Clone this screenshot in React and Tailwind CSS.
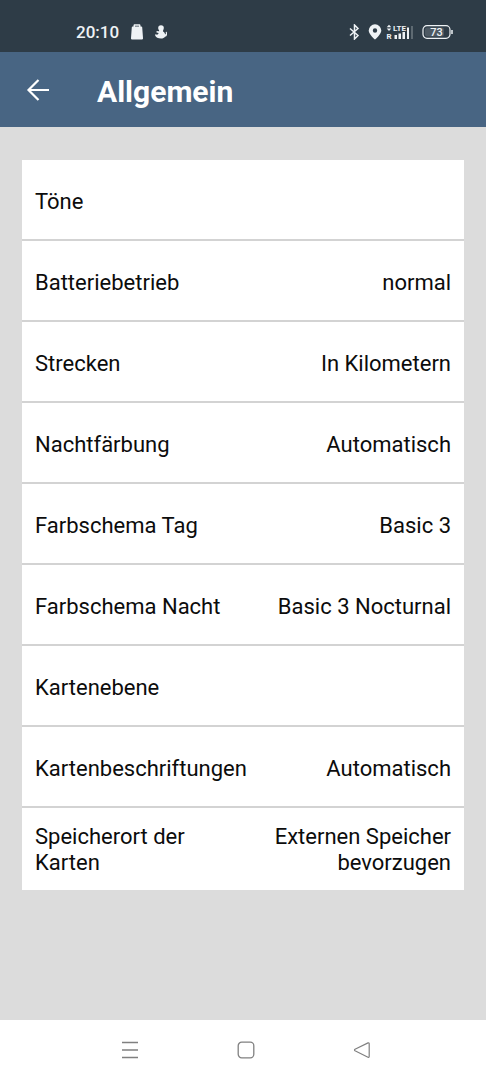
import React from 'react';

const settings = [
    { label: 'Töne' },
    { label: 'Batteriebetrieb', value: 'normal' },
    { label: 'Strecken', value: 'In Kilometern' },
    { label: 'Nachtfärbung', value: 'Automatisch' },
    { label: 'Farbschema Tag', value: 'Basic 3' },
    { label: 'Farbschema Nacht', value: 'Basic 3 Nocturnal' },
    { label: 'Kartenebene' },
    { label: 'Kartenbeschriftungen', value: 'Automatisch' },
    { label: 'Speicherort der Karten', value: 'Externen Speicher bevorzugen' },
];

const StatusBar = () => (
    <div className="flex h-[52px] items-center justify-between bg-[#2e3c47] pt-3 pr-8 pl-[76px] text-[#eef2f5]">
        <div className="flex items-center gap-3">
            <span className="text-[17px] leading-5 font-medium">20:10</span>
            <svg className="h-4 w-3" viewBox="0 0 12 16" fill="currentColor" aria-hidden="true">
                <path d="M2.500 2.500V1.400C2.500.7 3 .3 3.700.3h4.600c.7 0 1.200.4 1.200 1.100v1.100h.8c.5 0 .8.3.9.8L12 14c.1 1-.5 1.600-1.400 1.600H1.400C.5 15.600-.1 15 0 14L.8 3.300c.1-.5.4-.8.9-.8zm1.500 0h4v-.8H4z" />
            </svg>
            <svg className="h-4 w-3" viewBox="0 0 12 16" fill="currentColor" aria-hidden="true">
                <circle cx="6" cy="4" r="2.800" />
                <path d="M4 5.500h4.200L8 7.500c1.400.6 2.100 1.800 2 3.100.9-.4 1.100-1.300.6-2.500l1.100-.4c.9 2.500.2 4.600-1.700 5.100-.7 1.200-2.100 1.800-4 1.800-2.900 0-5.100-1-5.900-3.300-.3-.9.600-1.300 1.300-.9.5.4 1 .3 1.500-.1l.8-1.300-2.200-.6.100-1.300 2.600.2z" />
            </svg>
        </div>
        <div className="flex items-center">
            <svg className="mr-2 h-4 w-3" viewBox="0 0 12 16" fill="none" stroke="currentColor" strokeWidth="1.500" aria-hidden="true">
                <path d="M2 4.500 10 11.500 6.500 15V1L10 4.500l-8 7" />
            </svg>
            <svg className="mr-1 h-4 w-[14px]" viewBox="0 0 14 16" fill="currentColor" fillRule="evenodd" aria-hidden="true">
                <path d="M7 .3A6.300 6.300 0 0 0 .7 6.600C.7 10.300 7 15.700 7 15.700s6.300-5.400 6.300-9.100A6.300 6.300 0 0 0 7 .3zm0 4a2.200 2.200 0 1 1 0 4.400 2.200 2.200 0 0 1 0-4.400z" />
            </svg>
            <svg className="mr-2 h-4 w-[28px]" viewBox="0 0 28 16" fill="currentColor" aria-hidden="true">
                <path d="M3 .8 5.300 3.300H.7zM3 7 .7 4.600h4.600z" />
                <text x="0.500" y="15" fontSize="8" fontWeight="700" fontFamily="Roboto, sans-serif">R</text>
                <text x="7" y="6.800" fontSize="8" fontWeight="700" fontFamily="Roboto, sans-serif">LTE</text>
                <path d="M8.500 11H11v4H8.500zM12.500 9.500H15V15h-2.500zM16.500 8H19v7h-2.500zM21 3.500h2V15h-2z" />
                <path d="M25 2h2v13h-2z" opacity=".25" />
            </svg>
            <svg className="h-4 w-8" viewBox="0 0 32 16" aria-hidden="true">
                <rect x="1" y="1.700" width="27" height="12.600" rx="4" fill="none" stroke="currentColor" strokeWidth="1.200" />
                <rect x="3" y="3.500" width="19" height="9" rx="2" fill="#4d5963" />
                <path d="M30 6v4" stroke="currentColor" strokeWidth="1.500" />
                <text x="14.500" y="12" textAnchor="middle" fontSize="11" fontWeight="500" fontFamily="Roboto, sans-serif" fill="currentColor">73</text>
            </svg>
        </div>
    </div>
);

const Header = () => (
    <header className="flex h-[75px] items-center bg-[#486583] pl-6 text-white">
        <button type="button" aria-label="Zurück" className="mr-[45px] flex h-7 w-7 items-center justify-center">
            <svg className="h-6 w-6" viewBox="0 0 24 24" fill="none" stroke="currentColor" strokeWidth="2.200" aria-hidden="true">
                <path d="M23 12H3M12.500 2 2.500 12l10 10" />
            </svg>
        </button>
        <h1 className="pt-1 text-[30px] leading-8 font-bold">Allgemein</h1>
    </header>
);

const SettingRow = ({ label, value }) => (
    <li className="border-b-2 border-[#d3d3d3] last:border-b-0">
        <button type="button" className="grid min-h-[79px] w-full grid-cols-2 items-center px-[13px] pt-1 text-[22px] leading-[26px] text-[#0c0c0c]">
            <span className="text-left">{label}</span>
            {value && <span className="text-right">{value}</span>}
        </button>
    </li>
);

const NavBar = () => (
    <nav className="flex h-[60px] items-center justify-center gap-[98px] bg-white pl-[6px] text-[#808080]">
        <button type="button" aria-label="Letzte Apps">
            <svg className="h-[18px] w-[18px]" viewBox="0 0 18 18" fill="none" stroke="currentColor" strokeWidth="1.300" aria-hidden="true">
                <path d="M1 1.500h16M1 9h16M1 16.500h16" />
            </svg>
        </button>
        <button type="button" aria-label="Startbildschirm">
            <svg className="h-[18px] w-[18px]" viewBox="0 0 18 18" fill="none" stroke="currentColor" strokeWidth="1.300" aria-hidden="true">
                <rect x="1.200" y="1.200" width="15.600" height="15.600" rx="3.500" />
            </svg>
        </button>
        <button type="button" aria-label="Zurück">
            <svg className="h-[18px] w-[18px]" viewBox="0 0 18 18" fill="none" stroke="currentColor" strokeWidth="1.200" strokeLinejoin="round" aria-hidden="true">
                <path d="M15 1.900 2 8.200q-1 .8 0 1.600l13 6.400q1.200.4 1.200-.9V2.700q0-1.200-1.200-.8z" />
            </svg>
        </button>
    </nav>
);

const App = () => (
    <div className="flex min-h-screen flex-col bg-[#dcdcdc] font-['Roboto',sans-serif]">
        <StatusBar />
        <Header />
        <main className="flex-1 px-[22px] pt-[33px] pb-8">
            <ul className="bg-white pb-[3px]">
                {settings.map((item) => (
                    <SettingRow key={item.label} label={item.label} value={item.value} />
                ))}
            </ul>
        </main>
        <NavBar />
    </div>
);

export default App;
